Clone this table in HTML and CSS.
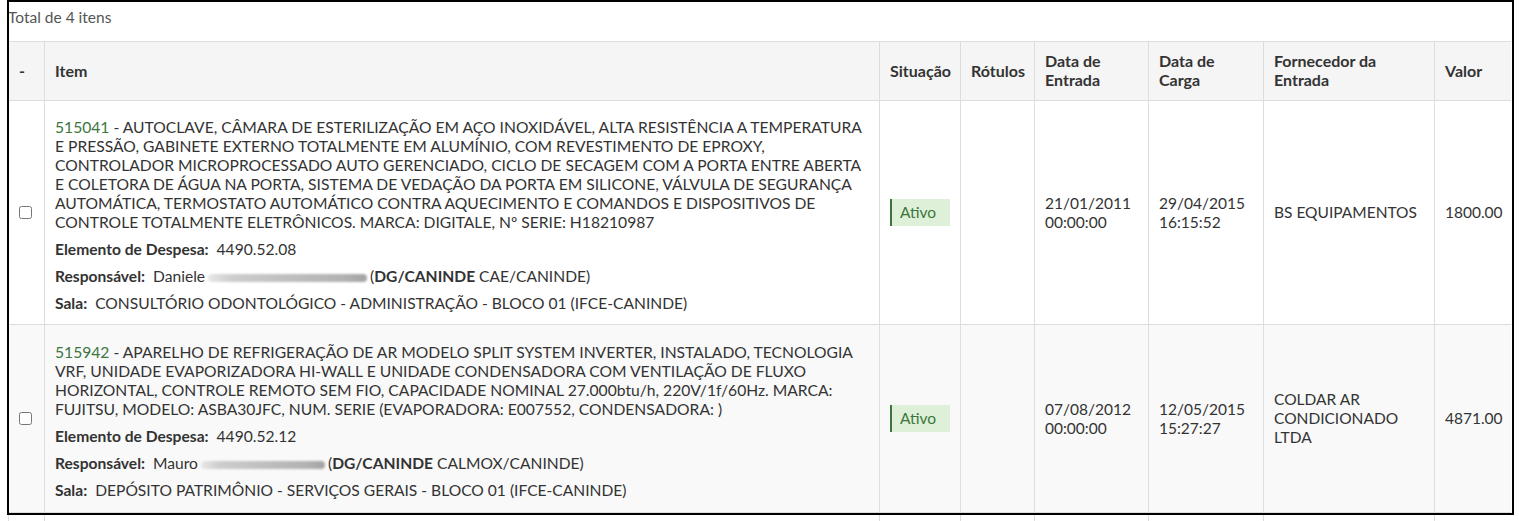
FILE: index.html
```html
<!DOCTYPE html>
<html lang="pt-BR">
<head>
<meta charset="utf-8">
<title>Itens</title>
<link rel="stylesheet" href="styles.css">
</head>
<body>
<div class="total">Total de 4 itens</div>
<table class="items">
  <colgroup>
    <col class="c-check">
    <col class="c-item">
    <col class="c-sit">
    <col class="c-rot">
    <col class="c-ent">
    <col class="c-carga">
    <col class="c-forn">
    <col class="c-valor">
  </colgroup>
  <thead>
    <tr>
      <th>-</th>
      <th>Item</th>
      <th>Situação</th>
      <th>Rótulos</th>
      <th>Data de<br>Entrada</th>
      <th>Data de<br>Carga</th>
      <th>Fornecedor da<br>Entrada</th>
      <th>Valor</th>
    </tr>
  </thead>
  <tbody>
    <tr class="row-light">
      <td class="check-cell"><input type="checkbox" class="check"></td>
      <td class="item-cell">
        <div class="desc"><span class="code">515041</span> - AUTOCLAVE, CÂMARA DE ESTERILIZAÇÃO EM AÇO INOXIDÁVEL, ALTA RESISTÊNCIA A TEMPERATURA<br>E PRESSÃO, GABINETE EXTERNO TOTALMENTE EM ALUMÍNIO, COM REVESTIMENTO DE EPROXY,<br>CONTROLADOR MICROPROCESSADO AUTO GERENCIADO, CICLO DE SECAGEM COM A PORTA ENTRE ABERTA<br>E COLETORA DE ÁGUA NA PORTA, SISTEMA DE VEDAÇÃO DA PORTA EM SILICONE, VÁLVULA DE SEGURANÇA<br>AUTOMÁTICA, TERMOSTATO AUTOMÁTICO CONTRA AQUECIMENTO E COMANDOS E DISPOSITIVOS DE<br>CONTROLE TOTALMENTE ELETRÔNICOS. MARCA: DIGITALE, Nº SERIE: H18210987</div>
        <div class="meta"><b>Elemento de Despesa:</b>&nbsp; 4490.52.08</div>
        <div class="meta"><b>Responsável:</b>&nbsp; Daniele<span class="blur blur-long"></span>(<b>DG/CANINDE</b> CAE/CANINDE)</div>
        <div class="meta"><b>Sala:</b>&nbsp; CONSULTÓRIO ODONTOLÓGICO - ADMINISTRAÇÃO - BLOCO 01 (IFCE-CANINDE)</div>
      </td>
      <td><span class="badge">Ativo</span></td>
      <td></td>
      <td>21/01/2011 00:00:00</td>
      <td>29/04/2015 16:15:52</td>
      <td>BS EQUIPAMENTOS</td>
      <td>1800.00</td>
    </tr>
    <tr class="row-gray">
      <td class="check-cell"><input type="checkbox" class="check"></td>
      <td class="item-cell item-cell-2">
        <div class="desc"><span class="code">515942</span> - APARELHO DE REFRIGERAÇÃO DE AR MODELO SPLIT SYSTEM INVERTER, INSTALADO, TECNOLOGIA<br>VRF, UNIDADE EVAPORIZADORA HI-WALL E UNIDADE CONDENSADORA COM VENTILAÇÃO DE FLUXO<br>HORIZONTAL, CONTROLE REMOTO SEM FIO, CAPACIDADE NOMINAL 27.000btu/h, 220V/1f/60Hz. MARCA:<br>FUJITSU, MODELO: ASBA30JFC, NUM. SERIE (EVAPORADORA: E007552, CONDENSADORA: )</div>
        <div class="meta"><b>Elemento de Despesa:</b>&nbsp; 4490.52.12</div>
        <div class="meta"><b>Responsável:</b>&nbsp; Mauro<span class="blur blur-short"></span>(<b>DG/CANINDE</b> CALMOX/CANINDE)</div>
        <div class="meta"><b>Sala:</b>&nbsp; DEPÓSITO PATRIMÔNIO - SERVIÇOS GERAIS - BLOCO 01 (IFCE-CANINDE)</div>
      </td>
      <td><span class="badge">Ativo</span></td>
      <td></td>
      <td>07/08/2012 00:00:00</td>
      <td>12/05/2015 15:27:27</td>
      <td>COLDAR AR CONDICIONADO LTDA</td>
      <td>4871.00</td>
    </tr>
    <tr class="row-light row-more">
      <td></td><td></td><td></td><td></td><td></td><td></td><td></td><td></td>
    </tr>
  </tbody>
</table>
<div class="frame"></div>
</body>
</html>
```

FILE: styles.css
```css
html, body {
  background: #ffffff;
}

body {
  margin: 8px;
  font-family: Lato, "Open Sans", sans-serif;
  font-size: 15.5px;
  line-height: 19px;
  color: #333333;
}

.total {
  color: #555555;
  line-height: 19px;
  margin-bottom: 14px;
}

.items {
  width: 100%;
  border-collapse: collapse;
  table-layout: fixed;
}

.c-check { width: 36px; }
.c-item { width: 835px; }
.c-sit { width: 81px; }
.c-rot { width: 74px; }
.c-ent { width: 114px; }
.c-carga { width: 115px; }
.c-forn { width: 171px; }
.c-valor { width: 77px; }

.items th,
.items td {
  border: 1px solid #dddddd;
  padding: 10px;
  vertical-align: middle;
  text-align: left;
}

.items th {
  background: #f5f5f5;
  font-weight: bold;
  font-size: 16px;
  color: #333333;
  padding-top: 9px;
  padding-bottom: 11px;
}

.row-light td {
  background: #ffffff;
}

.row-gray td {
  background: #f9f9f9;
}

.row-more td {
  height: 40px;
}

.check-cell {
  padding-left: 10px;
  padding-right: 0;
}

.check {
  margin: 0;
  width: 13px;
  height: 13px;
  display: block;
}

.items td.item-cell {
  padding: 17px 10px 11px 10px;
}

.items td.item-cell-2 {
  padding-top: 18px;
  padding-bottom: 12px;
}

.desc {
  margin-bottom: 8px;
  white-space: nowrap;
  font-size: 15.65px;
}

.code {
  color: #3c763d;
}

.meta {
  margin-bottom: 8px;
  font-size: 15.6px;
}

.meta:last-child {
  margin-bottom: 0;
}

.meta b {
  font-weight: bold;
}

.blur {
  display: inline-block;
  height: 8px;
  margin: 0 3px;
  vertical-align: middle;
  border-radius: 5px;
  background: linear-gradient(to right, #e8e8e8 0%, #cdcdcd 15%, #bfbfbf 50%, #b2b2b2 85%, #a3a3a3 100%);
  filter: blur(1.2px);
}

.blur-long {
  width: 159px;
}

.blur-short {
  width: 124px;
}

.badge {
  display: block;
  background: #dff0d8;
  color: #3c763d;
  border-left: 2px solid #3c763d;
  padding: 4px 8px;
  line-height: 19px;
}

.frame {
  position: absolute;
  left: 7px;
  top: 0;
  width: 1507px;
  height: 515px;
  box-sizing: border-box;
  border: 2px solid #000000;
  pointer-events: none;
}
```
